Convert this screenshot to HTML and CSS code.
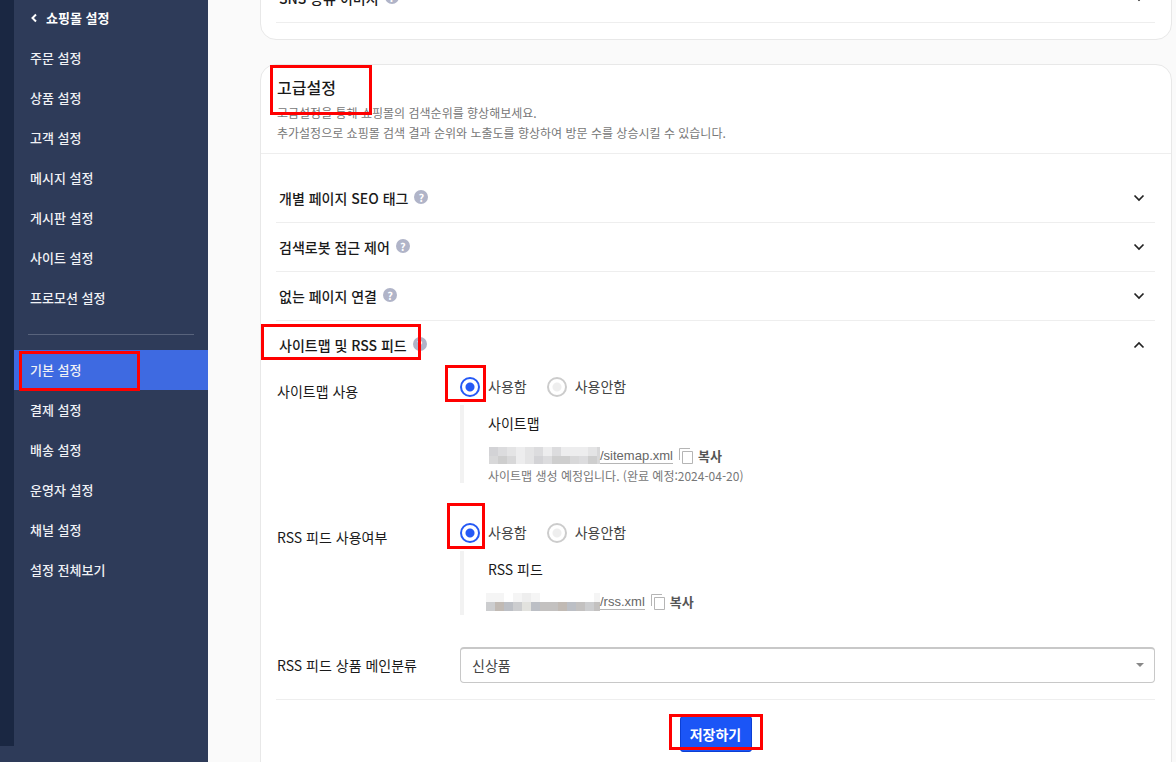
FILE: index.html
```
<!DOCTYPE html>
<html lang="ko">
<head>
    <meta charset="UTF-8">
    <meta name="viewport" content="width=device-width, initial-scale=1.0">
    <title>기본 설정</title>
    <link rel="stylesheet" href="styles.css">
</head>
<body>
<aside class="sidebar">
    <div class="rail"></div>
    <nav class="menu">
        <a class="menu-back" href="#">
            <svg width="8" height="10" viewBox="0 0 8 10" fill="none" stroke="currentColor" stroke-width="2"><path d="M6 1.5 2.5 5 6 8.5"/></svg>
            쇼핑몰 설정
        </a>
        <a class="menu-item" href="#">주문 설정</a>
        <a class="menu-item" href="#">상품 설정</a>
        <a class="menu-item" href="#">고객 설정</a>
        <a class="menu-item" href="#">메시지 설정</a>
        <a class="menu-item" href="#">게시판 설정</a>
        <a class="menu-item" href="#">사이트 설정</a>
        <a class="menu-item" href="#">프로모션 설정</a>
        <hr class="menu-line">
        <a class="menu-item active" href="#">기본 설정<span class="mark mark-menu"></span></a>
        <a class="menu-item" href="#">결제 설정</a>
        <a class="menu-item" href="#">배송 설정</a>
        <a class="menu-item" href="#">운영자 설정</a>
        <a class="menu-item" href="#">채널 설정</a>
        <a class="menu-item" href="#">설정 전체보기</a>
    </nav>
</aside>

<main class="content">
    <section class="card">
        <div class="row">
            <h3>SNS 공유 이미지</h3>
            <button class="help" type="button" aria-label="도움말">?</button>
            <button class="toggle" type="button" aria-label="펼치기">
                <svg width="12" height="8" viewBox="0 0 12 8"><path d="M1.5 1.5 6 6l4.5-4.5"/></svg>
            </button>
        </div>
    </section>

    <section class="card">
        <header class="card-head">
            <h2>고급설정</h2>
            <p>고급설정을 통해 쇼핑몰의 검색순위를 향상해보세요.<br>추가설정으로 쇼핑몰 검색 결과 순위와 노출도를 향상하여 방문 수를 상승시킬 수 있습니다.</p>
            <span class="mark mark-head"></span>
        </header>

        <div class="row">
            <h3>개별 페이지 SEO 태그</h3>
            <button class="help" type="button" aria-label="도움말">?</button>
            <button class="toggle" type="button" aria-label="펼치기">
                <svg width="12" height="8" viewBox="0 0 12 8"><path d="M1.5 1.5 6 6l4.5-4.5"/></svg>
            </button>
        </div>
        <div class="row">
            <h3>검색로봇 접근 제어</h3>
            <button class="help" type="button" aria-label="도움말">?</button>
            <button class="toggle" type="button" aria-label="펼치기">
                <svg width="12" height="8" viewBox="0 0 12 8"><path d="M1.5 1.5 6 6l4.5-4.5"/></svg>
            </button>
        </div>
        <div class="row">
            <h3>없는 페이지 연결</h3>
            <button class="help" type="button" aria-label="도움말">?</button>
            <button class="toggle" type="button" aria-label="펼치기">
                <svg width="12" height="8" viewBox="0 0 12 8"><path d="M1.5 1.5 6 6l4.5-4.5"/></svg>
            </button>
        </div>
        <div class="row open">
            <h3>사이트맵 및 RSS 피드</h3>
            <button class="help" type="button" aria-label="도움말">?</button>
            <button class="toggle" type="button" aria-label="접기">
                <svg width="12" height="8" viewBox="0 0 12 8"><path d="M1.5 6.5 6 2l4.5 4.5"/></svg>
            </button>
            <span class="mark mark-row"></span>
        </div>

        <form class="fields">
            <div class="field">
                <div class="field-name" id="sitemapName">사이트맵 사용</div>
                <div role="radiogroup" aria-labelledby="sitemapName">
                    <div class="radios">
                        <label><input type="radio" name="sitemap" checked>사용함</label>
                        <label><input type="radio" name="sitemap">사용안함</label>
                        <span class="mark mark-sitemap"></span>
                    </div>
                    <div class="detail">
                        <h4>사이트맵</h4>
                        <div class="link-line">
                            <svg class="mosaic" width="112" height="18" viewBox="0 0 112 18" shape-rendering="crispEdges">
                                <path fill="#d3d3d6" d="M1 0h9v9H1zM37 9h18v8H37z"/>
                                <path fill="#dcdcde" d="M10 0h9v9h-9zM46 0h9v9h-9zM64 0h9v9h-9zM55 9h9v8h-9zM91 9h9v8h-9z"/>
                                <path fill="#e4e4e5" d="M19 0h9v9h-9zM37 0h9v9h-9zM100 0h9v9h-9zM37 9h9v8h-9z"/>
                                <path fill="#ededee" d="M28 0h9v9h-9zM55 0h9v9h-9zM73 0h18v9H73zM91 0h9v9h-9zM28 9h9v8h-9z"/>
                                <path fill="#cecece" d="M10 9h9v8h-9zM64 9h9v8h-9zM73 9h9v8h-9zM100 9h9v8h-9z"/>
                                <path fill="#d8d8d9" d="M1 9h9v8H1zM19 9h9v8h-9zM82 9h9v8h-9zM109 0h3v17h-3z"/>
                            </svg>
                            <a class="url" href="#">/sitemap.xml</a>
                            <button class="copy" type="button">
                                <svg width="14" height="16" viewBox="0 0 14 16"><path d="M.5 12V.5H11M3.5 3.5h10v12h-10z"/></svg>
                                복사
                            </button>
                        </div>
                        <p>사이트맵 생성 예정입니다. (완료 예정:2024-04-20)</p>
                    </div>
                </div>
            </div>

            <div class="field">
                <div class="field-name" id="rssName">RSS 피드 사용여부</div>
                <div role="radiogroup" aria-labelledby="rssName">
                    <div class="radios">
                        <label><input type="radio" name="rss" checked>사용함</label>
                        <label><input type="radio" name="rss">사용안함</label>
                        <span class="mark mark-rss"></span>
                    </div>
                    <div class="detail">
                        <h4>RSS 피드</h4>
                        <div class="link-line">
                            <svg class="mosaic" width="112" height="18" viewBox="2 0 112 18" overflow="visible" shape-rendering="crispEdges">
                                <path fill="#f5f5f5" d="M0 0h18v9H0zM27 0h9v9h-9zM45 0h9v9h-9zM108 0h6v9h-6z"/>
                                <path fill="#eeeeee" d="M36 0h9v9h-9z"/>
                                <path fill="#cccdcf" d="M0 9h9v9H0zM27 9h9v9h-9zM81 9h9v9h-9zM99 9h9v9h-9z"/>
                                <path fill="#c1bab4" d="M9 9h9v9H9zM72 9h9v9h-9z"/>
                                <path fill="#bcbfc5" d="M18 9h9v9h-9zM45 9h9v9h-9zM81 9h9v9h-9z"/>
                                <path fill="#c3c1c0" d="M54 9h18v9H54zM90 9h9v9h-9zM108 9h6v9h-6z"/>
                                <path fill="#e2e2de" d="M36 9h9v9h-9z"/>
                            </svg>
                            <a class="url" href="#">/rss.xml</a>
                            <button class="copy" type="button">
                                <svg width="14" height="16" viewBox="0 0 14 16"><path d="M.5 12V.5H11M3.5 3.5h10v12h-10z"/></svg>
                                복사
                            </button>
                        </div>
                    </div>
                </div>
            </div>

            <div class="field select-field">
                <label for="category">RSS 피드 상품 메인분류</label>
                <div class="select-box">
                    <select id="category">
                        <option>신상품</option>
                    </select>
                </div>
            </div>

            <div class="actions">
                <div class="save-wrap">
                    <button class="save" type="submit">저장하기</button>
                    <span class="mark mark-save"></span>
                </div>
            </div>
        </form>
    </section>
</main>
</body>
</html>
```
FILE: styles.css
```
:root {
    --primary-color: #1b55f6;
    --menu-color: #2e3b59;
    --line-color: #eeeeee;
    --text-color: #1a1a1a;
}
* {
    box-sizing: border-box;
}
body {
    margin: 0;
    height: 100vh;
    display: flex;
    overflow: hidden;
    font-family: "Noto Sans CJK KR", sans-serif;
    font-size: 14px;
    line-height: 20px;
    color: var(--text-color);
    background: #fafafa;
}
h2, h3, h4, p {
    margin: 0;
}
button, select {
    font-family: inherit;
    font-size: inherit;
    line-height: inherit;
}
button {
    padding: 0;
    border: none;
    background: none;
    cursor: pointer;
}

/* sidebar */
.sidebar {
    flex: 0 0 208px;
    display: flex;
    background: var(--menu-color);
}
.rail {
    width: 14px;
    height: calc(100vh - 16px);
    background: #1a2742;
}
.menu {
    flex: 1;
}
.menu-back, .menu-item {
    position: relative;
    display: flex;
    align-items: center;
    height: 40px;
    padding-left: 16px;
    color: #f0f1f5;
    font-size: 13px;
    font-weight: 500;
    text-decoration: none;
}
.menu-back {
    gap: 8px;
    height: 38px;
    padding-bottom: 2px;
    color: #ffffff;
    font-weight: 700;
}
.menu-item.active {
    background: #3e6ae1;
}
.menu-line {
    height: 1px;
    margin: 16px 14px 15px;
    border: none;
    background: #58637c;
}

/* content, scrolled down to the last row of the first card */
.content {
    flex: 1;
    min-width: 0;
    padding: 0 4px 0 52px;
    overflow: hidden;
}
.card {
    margin-bottom: 24px;
    padding: 0 16px 16px 15px;
    background: #ffffff;
    border: 1px solid #e8e8e8;
    border-radius: 16px;
}
.card:first-child {
    margin-top: -27px;
}
.card:last-child {
    padding-bottom: 40px;
}
.card-head {
    position: relative;
    margin: 0 -16px 20px -15px;
    padding: 10px 16px;
    border-bottom: 1px solid var(--line-color);
}
.card-head h2 {
    font-size: 16px;
    font-weight: 500;
    line-height: 24px;
}
.card-head p {
    margin-top: 4px;
    color: #777777;
    font-size: 12px;
}
.row {
    position: relative;
    display: flex;
    align-items: center;
    height: 49px;
    padding: 0 10px 0 3px;
    border-bottom: 1px solid var(--line-color);
}
.row.open {
    height: 48px;
    border-bottom: none;
}
.row h3 {
    margin-bottom: 1px;
    font-size: 14px;
    font-weight: 500;
}
.help {
    width: 14px;
    height: 14px;
    margin: 0 0 2px 6px;
    border-radius: 50%;
    background: #b0b4c8;
    color: #ffffff;
    font-size: 11px;
    font-weight: 700;
    line-height: 14px;
}
.toggle {
    display: flex;
    margin-left: auto;
}
.toggle path {
    fill: none;
    stroke: #222222;
    stroke-width: 1.7;
}

/* sitemap and rss fields */
.field {
    display: grid;
    grid-template-columns: 183px 1fr;
    margin-left: 1px;
    padding-top: 8px;
    padding-bottom: 32px;
}
.field-name {
    padding-top: 4px;
}
.radios {
    position: relative;
    display: flex;
    gap: 20px;
}
.radios label {
    display: flex;
    gap: 8px;
    color: #444444;
    line-height: 18px;
}
.radios input {
    appearance: none;
    width: 20px;
    height: 20px;
    margin: 0;
    border: 2px solid #cccccc;
    border-radius: 50%;
    background: radial-gradient(circle, #eeeeee 4px, #ffffff 5px);
}
.radios input:checked {
    border-color: #2559f5;
    background: radial-gradient(circle, #2559f5 4px, #ffffff 5px);
}
.detail {
    min-height: 64px;
    margin-top: 8px;
    padding: 8px 0 0 24px;
    border-left: 4px solid #f2f2f2;
}
.detail h4 {
    font-size: 14px;
    font-weight: 400;
}
.detail p {
    margin-top: 2px;
    color: #777777;
    font-size: 12px;
    line-height: 14px;
}
.link-line {
    display: flex;
    align-items: center;
    height: 22px;
    margin-top: 12px;
}
.url {
    color: #666666;
    font-family: "Liberation Sans", sans-serif;
    font-size: 13px;
    line-height: 15px;
    text-decoration: none;
    border-bottom: 1px solid #b5b5b5;
}
.copy {
    display: flex;
    align-items: center;
    gap: 5px;
    margin-left: 6px;
    color: #555555;
    font-size: 13px;
    font-weight: 700;
    line-height: 18px;
}
.copy path {
    fill: none;
    stroke: #b5b5b5;
}
.select-field {
    align-items: center;
    padding: 0 0 16px;
}
.select-box {
    position: relative;
}
.select-box::after {
    content: "";
    position: absolute;
    top: 16px;
    right: 11px;
    border: 4px solid transparent;
    border-top-color: #888888;
    border-bottom: none;
    pointer-events: none;
}
.select-box select {
    appearance: none;
    display: block;
    width: 100%;
    height: 36px;
    padding: 0 11px 2px;
    border: 1px solid #c8c8c8;
    border-top-width: 2px;
    border-radius: 4px;
    background: #ffffff;
    color: #444444;
}
.actions {
    display: flex;
    justify-content: center;
    padding-top: 16px;
    border-top: 1px solid var(--line-color);
}
.save-wrap {
    position: relative;
}
.save {
    display: block;
    width: 72px;
    height: 36px;
    border: 1px solid #0c3fd4;
    border-radius: 3px;
    background: var(--primary-color);
    color: #ffffff;
    font-weight: 700;
}

/* red highlight frames */
.mark {
    position: absolute;
    border: 3px solid #ff0000;
    pointer-events: none;
}
.mark-menu {
    top: 1px;
    left: 5px;
    width: 121px;
    height: 40px;
}
.mark-head {
    top: 0;
    left: 9px;
    width: 102px;
    height: 50px;
}
.mark-row {
    top: 3px;
    left: -15px;
    width: 160px;
    height: 36px;
}
.mark-sitemap {
    top: -12px;
    left: -15px;
    width: 41px;
    height: 37px;
}
.mark-rss {
    top: -20px;
    left: -13px;
    width: 38px;
    height: 46px;
}
.mark-save {
    top: -2px;
    left: -11px;
    width: 94px;
    height: 36px;
}
```
